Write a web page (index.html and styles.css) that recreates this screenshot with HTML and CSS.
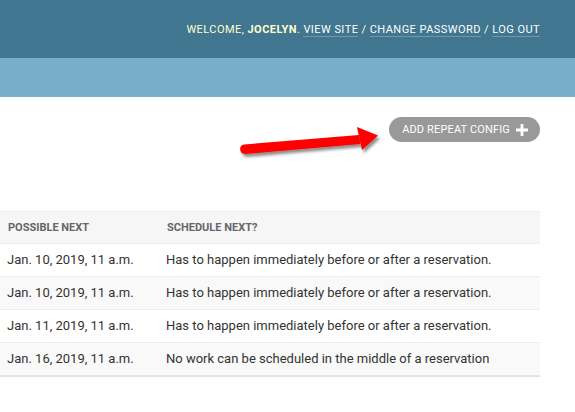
FILE: index.html
```html
<!DOCTYPE html>
<html lang="en">
<head>
  <meta charset="UTF-8" />
  <title>Repeat configs | Django site admin</title>
  <link rel="stylesheet" href="styles.css">
</head>
<body>

<header id="header">
  <div id="user-tools">
    Welcome, <strong>jocelyn</strong>.
    <a href="#">View site</a> /
    <a href="#">Change password</a> /
    <a href="#">Log out</a>
  </div>
</header>

<div class="breadcrumbs"></div>

<div id="content">
  <ul class="object-tools">
    <li>
      <a href="#" class="addlink">Add repeat config
        <svg class="plus" width="12" height="12" viewBox="0 0 12 12">
          <path d="M4.6 0h2.8v4.6H12v2.8H7.4V12H4.6V7.4H0V4.6h4.6z" fill="#fff"/>
        </svg>
      </a>
    </li>
  </ul>

  <!-- red annotation arrow pointing at the add button -->
  <svg class="arrow" width="160" height="45" viewBox="0 0 160 45">
    <defs>
      <filter id="shadow" x="-10%" y="-30%" width="130%" height="180%">
        <feDropShadow dx="2" dy="3" stdDeviation="1.6" flood-color="#000" flood-opacity="0.45"/>
      </filter>
    </defs>
    <g filter="url(#shadow)" fill="#f00">
      <path d="M9 27.5 L124 18 L125.5 27 L9.8 37 A4.8 4.8 0 0 1 9 27.5z"/>
      <path d="M122 10 L143 18.5 L127 33z"/>
    </g>
  </svg>

  <table id="result_list">
    <thead>
      <tr>
        <th class="col-next">Possible next</th>
        <th>Schedule next?</th>
      </tr>
    </thead>
    <tbody>
      <tr class="row1">
        <td>Jan. 10, 2019, 11 a.m.</td>
        <td>Has to happen immediately before or after a reservation.</td>
      </tr>
      <tr class="row2">
        <td>Jan. 10, 2019, 11 a.m.</td>
        <td>Has to happen immediately before or after a reservation.</td>
      </tr>
      <tr class="row1">
        <td>Jan. 11, 2019, 11 a.m.</td>
        <td>Has to happen immediately before or after a reservation.</td>
      </tr>
      <tr class="row2">
        <td>Jan. 16, 2019, 11 a.m.</td>
        <td>No work can be scheduled in the middle of a reservation</td>
      </tr>
    </tbody>
  </table>
</div>

</body>
</html>
```

FILE: styles.css
```css
body {
  margin: 0;
  font-family: Roboto, "Liberation Sans", sans-serif;
  color: #333;
  background: #fff;
}

#header {
  height: 58px;
  background: #417690;
  display: flex;
  align-items: center;
  justify-content: flex-end;
  padding-right: 35px;
}

#user-tools {
  font-size: 11px;
  letter-spacing: 0.45px;
  text-transform: uppercase;
  color: #ffc;
  white-space: nowrap;
}

#user-tools a {
  color: #fff;
  text-decoration: none;
  border-bottom: 1px solid rgba(255, 255, 255, 0.25);
}

.breadcrumbs {
  height: 39px;
  background: #79aec8;
}

#content {
  position: relative;
  padding-right: 35px;
}

.object-tools {
  list-style: none;
  margin: 20px 0 0;
  padding: 0;
  display: flex;
  justify-content: flex-end;
}

.object-tools a {
  display: flex;
  align-items: center;
  height: 25px;
  padding: 0 12px 0 13px;
  background: #999;
  border-radius: 13px;
  color: #fff;
  font-size: 11px;
  letter-spacing: 0.15px;
  text-transform: uppercase;
  text-decoration: none;
}

.plus {
  margin-left: 6px;
}

.arrow {
  position: absolute;
  left: 235px;
  top: 0;
}

#result_list {
  width: 540px;
  margin-top: 69px;
  border-collapse: collapse;
  font-size: 13px;
}

#result_list th {
  background: #f6f6f6;
  border-top: 1px solid #eee;
  border-bottom: 1px solid #eee;
  padding: 8px;
  line-height: 15px;
  font-size: 11px;
  font-weight: 700;
  color: #666;
  text-align: left;
  text-transform: uppercase;
}

.col-next {
  width: 143px;
}

#result_list td {
  padding: 8px 7px;
  line-height: 16px;
  border-bottom: 1px solid #eee;
}

.row2 {
  background: #f9f9f9;
}

#result_list tr:last-child td {
  border-bottom: 2px solid #e4e4e4;
}
```
